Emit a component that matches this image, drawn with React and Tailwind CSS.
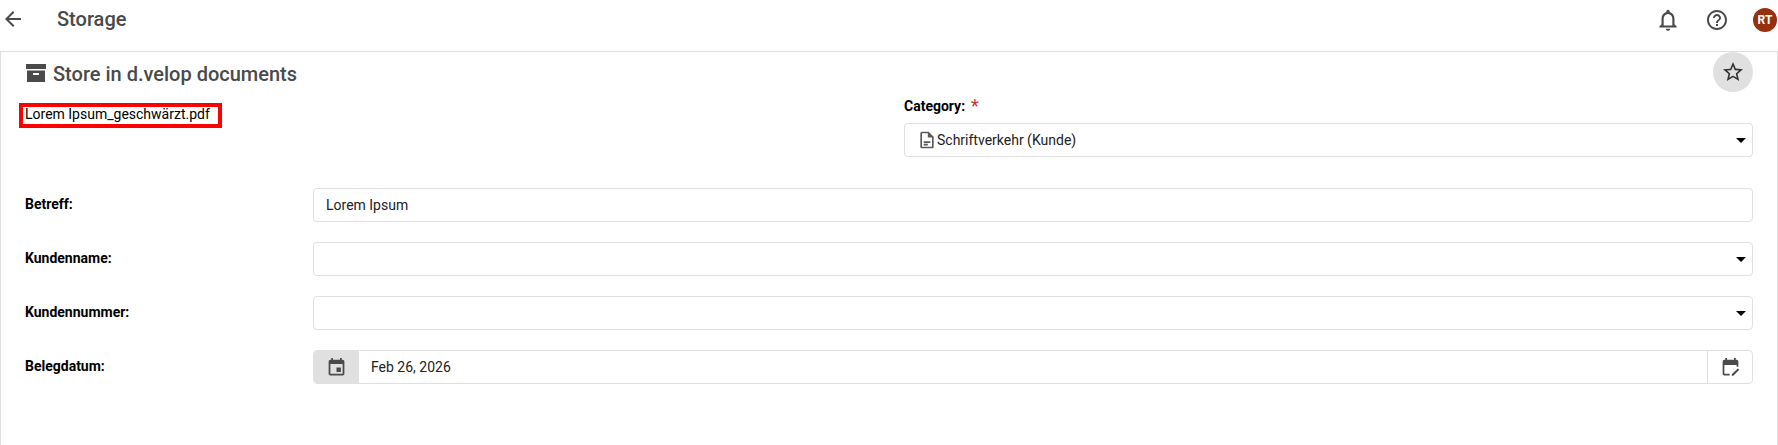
import React from 'react';

const Icon = ({ d, size = 24, className = '' }) => (
  <svg width={size} height={size} viewBox="0 0 24 24" fill="currentColor" className={`shrink-0 ${className}`}>
    <path d={d} />
  </svg>
);

const ARROW_BACK = 'M20 11H7.83l5.59-5.59L12 4l-8 8 8 8 1.41-1.41L7.83 13H20v-2z';
const BELL = 'M12 22c1.1 0 2-.9 2-2h-4c0 1.1.9 2 2 2zm6-6v-5c0-3.07-1.63-5.64-4.5-6.32V4c0-.83-.67-1.5-1.5-1.5s-1.5.67-1.5 1.5v.68C7.64 5.36 6 7.92 6 11v5l-2 2v1h16v-1l-2-2zm-2 1H8v-6c0-2.48 1.51-4.5 4-4.5s4 2.02 4 4.5v6z';
const HELP = 'M11 18h2v-2h-2v2zm1-16C6.48 2 2 6.48 2 12s4.48 10 10 10 10-4.48 10-10S17.52 2 12 2zm0 18c-4.41 0-8-3.59-8-8s3.59-8 8-8 8 3.59 8 8-3.59 8-8 8zm0-14c-2.21 0-4 1.79-4 4h2c0-1.1.9-2 2-2s2 .9 2 2c0 2-3 1.75-3 5h2c0-2.25 3-2.5 3-5 0-2.21-1.79-4-4-4z';
const STAR = 'M22 9.24l-7.19-.62L12 2 9.19 8.63 2 9.24l5.46 4.73L5.82 21 12 17.27 18.18 21l-1.63-7.03L22 9.24zM12 15.4l-3.76 2.27 1-4.28-3.32-2.88 4.38-.38L12 6.1l1.71 4.04 4.38.38-3.32 2.88 1 4.28L12 15.4z';
const ARCHIVE = 'M2 3h20v5H2zM3 9.5h18V21H3zM9 12v2h6v-2z';
const DOC = 'M6 2h8l6 6v12c0 1.1-.9 2-2 2H6c-1.1 0-2-.9-2-2V4c0-1.1.9-2 2-2zm0 2v16h12V9h-5V4H6zm2 9.5h8v2H8zm0 3h5v2H8z';
const EVENT = 'M17 12h-5v5h5v-5zM16 1v2H8V1H6v2H5c-1.11 0-1.99.9-1.99 2L3 19c0 1.1.89 2 2 2h14c1.1 0 2-.9 2-2V5c0-1.1-.9-2-2-2h-1V1h-2zm3 18H5V8h14v11z';
const EVENT_EDIT = 'M16 1v2H8V1H6v2H5c-1.1 0-2 .9-2 2v14c0 1.1.9 2 2 2h6v-2H5V9h14v2h2V5c0-1.1-.9-2-2-2h-1V1h-2zM20.3 13l1.7 1.7-6.8 6.8H13.5v-1.7L20.3 13z';

const Caret = () => (
  <span className="w-0 h-0 border-x-[5px] border-x-transparent border-t-[5px] border-t-black" />
);

const Row = ({ label, children }) => (
  <div className="flex items-start">
    <div className="w-[288px] shrink-0 pt-[6px] text-[14px] leading-[20px] font-bold text-black">{label}</div>
    <div className="flex-1 min-w-0">{children}</div>
  </div>
);

const SelectBox = ({ children }) => (
  <div className="h-[34px] flex items-center justify-between border border-[#e0e0e0] rounded-[4px] bg-white pr-[6px]">
    <div className="flex items-center min-w-0">{children}</div>
    <Caret />
  </div>
);

export default function App() {
  return (
    <div className="w-[1778px] h-[445px] overflow-hidden bg-white font-['Roboto',sans-serif]">
      {/* Top bar */}
      <header className="h-[51px] flex items-start justify-between pt-[7px] text-[#4a4a4a]">
        <div className="flex items-center">
          <Icon d={ARROW_BACK} className="ml-[1px]" />
          <h1 className="ml-[32px] text-[20px] leading-[24px] font-medium">Storage</h1>
        </div>
        <div className="flex items-center">
          <Icon d={BELL} size={26} />
          <Icon d={HELP} size={24} className="ml-[24px]" />
          <div className="ml-[24px] mr-[1px] w-[24px] h-[24px] rounded-full bg-[#96300e] text-white text-[12px] font-bold flex items-center justify-center">
            RT
          </div>
        </div>
      </header>

      {/* Form panel */}
      <main className="h-[394px] border-t border-x border-[#e0e0e0] pl-[24px] pr-[24px]">
        <div className="h-[40px] flex items-center justify-between text-[#4a4a4a]">
          <div className="flex items-center gap-[5px]">
            <Icon d={ARCHIVE} size={24} className="-ml-[1px] mt-[1px]" />
            <h2 className="text-[20px] leading-[24px] font-medium mt-[3px]">Store in d.velop documents</h2>
          </div>
          <button className="w-[40px] h-[40px] rounded-full bg-[#e0e0e0] flex items-center justify-center">
            <Icon d={STAR} size={24} className="text-[#333]" />
          </button>
        </div>

        <div className="flex items-start justify-between">
          <div className="-ml-[6px] mt-[11px] w-[203px] h-[25px] border-[4px] border-[#ff0000] pl-[2px] text-[14px] leading-[15px] whitespace-nowrap text-black">
            Lorem Ipsum_geschwärzt.pdf
          </div>
          <div className="w-[849px]">
            <div className="h-[31px] flex items-start pt-[4px] text-[14px] leading-[20px] font-bold text-black">
              Category:
              <span className="ml-[6px] text-[18px] leading-[20px] font-normal text-[#d32f2f]">*</span>
            </div>
            <SelectBox>
              <Icon d={DOC} size={20} className="ml-[12px] text-[#5a5a5a]" />
              <span className="text-[14px] text-[#222]">Schriftverkehr (Kunde)</span>
            </SelectBox>
          </div>
        </div>

        <div className="mt-[31px] flex flex-col gap-[20px]">
          <Row label="Betreff:">
            <div className="h-[34px] flex items-center border border-[#e0e0e0] rounded-[4px] px-[12px] text-[14px] text-[#222]">
              Lorem Ipsum
            </div>
          </Row>
          <Row label="Kundenname:">
            <SelectBox />
          </Row>
          <Row label="Kundennummer:">
            <SelectBox />
          </Row>
          <Row label="Belegdatum:">
            <div className="h-[34px] flex items-stretch border border-[#e0e0e0] rounded-[4px] overflow-hidden">
              <div className="w-[45px] bg-[#e0e0e0] flex items-center justify-center text-[#4a4a4a]">
                <Icon d={EVENT} size={21} />
              </div>
              <div className="flex-1 flex items-center px-[12px] text-[14px] text-[#222]">Feb 26, 2026</div>
              <div className="w-[45px] border-l border-[#e0e0e0] flex items-center justify-center text-[#4a4a4a]">
                <Icon d={EVENT_EDIT} size={21} />
              </div>
            </div>
          </Row>
        </div>
      </main>
    </div>
  );
}
